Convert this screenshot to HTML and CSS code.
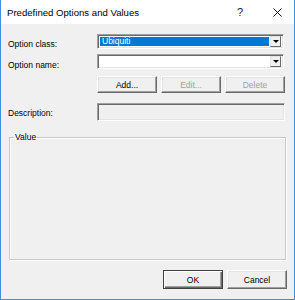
FILE: index.html
```html
<!DOCTYPE html>
<html>
<head>
<meta charset="utf-8">
<link rel="stylesheet" href="styles.css">
</head>
<body>
<div class="dialog">
  <div class="titlebar">
    <span class="title">Predefined Options and Values</span>
    <span class="help">?</span>
    <svg class="close" width="9" height="9" viewBox="0 0 9 9"><path d="M0.5 0.5L8.5 8.5M8.5 0.5L0.5 8.5" stroke="#111" stroke-width="1"/></svg>
  </div>
  <div class="content">
    <div class="form">
      <label class="lbl">Option class:</label>
      <div class="combo">
        <div class="field"><span class="sel">Ubiquiti</span></div>
        <div class="drop"><span class="tri"></span></div>
      </div>
      <label class="lbl">Option name:</label>
      <div class="combo">
        <div class="field"></div>
        <div class="drop"><span class="tri"></span></div>
      </div>
      <span></span>
      <div class="btnrow">
        <button class="btn">Add...</button>
        <button class="btn disabled">Edit...</button>
        <button class="btn disabled">Delete</button>
      </div>
      <label class="lbl desc-lbl">Description:</label>
      <div class="desc"></div>
    </div>
    <fieldset class="group">
      <legend>Value</legend>
    </fieldset>
    <div class="footer">
      <button class="btn big default">OK</button>
      <button class="btn big">Cancel</button>
    </div>
  </div>
</div>
</body>
</html>
```
FILE: styles.css
```css
html, body {
  margin: 0;
  padding: 0;
  background: #f0f0f0;
}
.dialog {
  width: 295px;
  height: 300px;
  box-sizing: border-box;
  border: 1px solid #3d8fdf;
  border-top: none;
  background: #f0f0f0;
  font-family: "Liberation Sans", Arial, sans-serif;
  font-size: 8.5px;
  color: #000;
  display: flex;
  flex-direction: column;
}
.titlebar {
  height: 24px;
  background: #fff;
  display: flex;
  align-items: center;
  padding-left: 6px;
  flex: none;
}
.title {
  font-size: 9.6px;
  flex: 1;
  padding-top: 1px;
}
.help {
  font-size: 11px;
  width: 10px;
  margin-right: 26px;
  color: #222;
}
.close {
  margin-right: 12px;
}
.content {
  flex: 1;
  padding: 10px 7px 0 7px;
  display: flex;
  flex-direction: column;
}
.form {
  display: grid;
  grid-template-columns: 89px 188px;
  align-items: center;
}
.lbl {
  line-height: 10px;
}
.combo {
  height: 15px;
  width: 187px;
  box-sizing: border-box;
  background: #fff;
  border: 1px solid;
  border-color: #a0a0a0 #fff #fff #a0a0a0;
  box-shadow: inset 1px 1px #696969, inset -1px -1px #e3e3e3;
  display: flex;
  padding: 2px 2px 2px 2px;
  margin-bottom: 5px;
}
.form .combo:nth-of-type(2) {
  margin-bottom: 7px;
}
.field {
  flex: 1;
  display: flex;
  padding-right: 1px;
}
.sel {
  flex: 1;
  background: #0078d7;
  color: #fff;
  padding-left: 2px;
  line-height: 9px;
}
.drop {
  width: 11px;
  box-sizing: border-box;
  background: #f0f0f0;
  border: 1px solid;
  border-color: #e3e3e3 #696969 #696969 #e3e3e3;
  display: flex;
  align-items: center;
  justify-content: center;
  margin: -1px 0;
}
.tri {
  width: 0;
  height: 0;
  border-left: 3px solid transparent;
  border-right: 3px solid transparent;
  border-top: 3px solid #000;
}
.btnrow {
  display: flex;
  gap: 4px;
  margin-bottom: 10px;
}
.btn {
  font-family: "Liberation Sans", Arial, sans-serif;
  font-size: 8.5px;
  color: #000;
  width: 60px;
  height: 17px;
  padding: 0;
  box-sizing: border-box;
  background: #f0f0f0;
  border: 1px solid;
  border-color: #fff #696969 #696969 #fff;
  box-shadow: inset -1px -1px #a0a0a0, inset 1px 1px #e3e3e3;
}
.btn.disabled {
  color: #a0a0a0;
}
.desc {
  height: 18px;
  width: 188px;
  box-sizing: border-box;
  border: 1px solid;
  border-color: #a0a0a0 #fff #fff #a0a0a0;
  box-shadow: inset 1px 1px #696969, inset -1px -1px #e3e3e3;
  background: #f0f0f0;
}
.desc-lbl {
  padding-top: 2px;
}
.group {
  margin: 11px 0 0 1px;
  width: 277px;
  height: 128px;
  box-sizing: border-box;
  border: 1px solid #c8c8c8;
  box-shadow: inset 1px 1px #fff, 1px 1px #fff;
  padding: 0;
  flex: none;
}
.group legend {
  margin-left: 4px;
  padding: 0 1px;
  line-height: 10px;
  font-size: 8.5px;
}
.footer {
  display: flex;
  justify-content: flex-end;
  gap: 4px;
  margin-top: 10px;
  padding-right: 0;
}
.btn.big {
  height: 19px;
}
.btn.default {
  border-color: #404040;
  box-shadow: inset 1px 1px #fff, inset -1px -1px #696969, inset -2px -2px #a0a0a0;
}
```
